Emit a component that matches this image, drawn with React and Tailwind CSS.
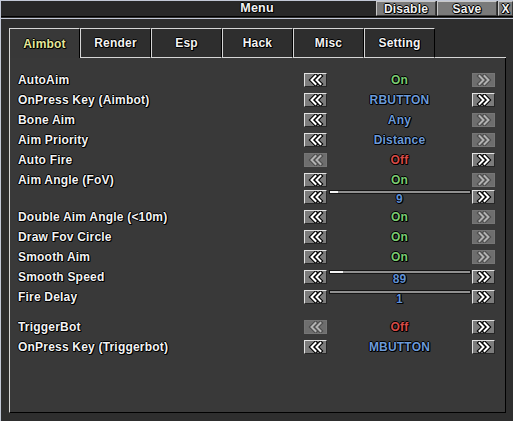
import React from "react";

const OL = "[text-shadow:1px_0_0_#000,-1px_0_0_#000,0_1px_0_#000,0_-1px_0_#000,1px_1px_0_#000]";

function Chevrons({ dir, dim }) {
  const pts =
    dir === "left"
      ? ["7.5,2 3.5,6 7.5,10", "12.5,2 8.5,6 12.5,10"]
      : ["3.5,2 7.5,6 3.5,10", "8.5,2 12.5,6 8.5,10"];
  const fg = dim ? "#b2b2b2" : "#ffffff";
  const bg = dim ? "#4c4c4c" : "#000000";
  return (
    <svg width="16" height="12" viewBox="0 0 16 12">
      {pts.map((p) => (
        <polyline key={p + "b"} points={p} fill="none" stroke={bg} strokeWidth="4.2" strokeLinejoin="miter" strokeLinecap="square" />
      ))}
      {pts.map((p) => (
        <polyline key={p + "f"} points={p} fill="none" stroke={fg} strokeWidth="2" strokeLinejoin="miter" strokeLinecap="square" />
      ))}
    </svg>
  );
}

function ArrowBtn({ dir, on }) {
  return on ? (
    <div className="w-[23px] h-[14px] flex items-center justify-center bg-[#7c7c7c] border border-t-[#e2e2e2] border-l-[#e2e2e2] border-b-[#262626] border-r-[#262626]">
      <Chevrons dir={dir} />
    </div>
  ) : (
    <div className="w-[23px] h-[14px] flex items-center justify-center bg-[#6e6e6e] border border-[#767676]">
      <Chevrons dir={dir} dim />
    </div>
  );
}

const colorCls = {
  green: "text-[#7acb72]",
  red: "text-[#d64a46]",
  blue: "text-[#6c9ad8]",
};

const rows = [
  { label: "AutoAim", value: "On", c: "green", l: true, r: false },
  { label: "OnPress Key (Aimbot)", value: "RBUTTON", c: "blue", l: true, r: true },
  { label: "Bone Aim", value: "Any", c: "blue", l: true, r: false },
  { label: "Aim Priority", value: "Distance", c: "blue", l: true, r: false },
  { label: "Auto Fire", value: "Off", c: "red", l: false, r: true },
  { label: "Aim Angle (FoV)", value: "On", c: "green", l: true, r: false },
  { slider: true, short: true, label: "", value: "9", fill: 8 },
  { label: "Double Aim Angle (<10m)", value: "On", c: "green", l: true, r: false },
  { label: "Draw Fov Circle", value: "On", c: "green", l: true, r: false },
  { label: "Smooth Aim", value: "On", c: "green", l: true, r: false },
  { slider: true, label: "Smooth Speed", value: "89", fill: 13 },
  { slider: true, label: "Fire Delay", value: "1", fill: 0 },
  { gap: true },
  { label: "TriggerBot", value: "Off", c: "red", l: false, r: true },
  { label: "OnPress Key (Triggerbot)", value: "MBUTTON", c: "blue", l: true, r: true },
];

function Row({ row }) {
  if (row.gap) return <div className="h-[10px]" />;
  if (row.slider) {
    return (
      <div className={row.short ? "h-[17px] flex items-start pl-[8px] pr-[10px]" : "h-[20px] flex items-center pl-[8px] pr-[10px]"}>
        <div className={`flex-1 leading-none ${OL}`}>{row.label}</div>
        <div className="w-[191px] flex items-start">
          <ArrowBtn dir="left" on />
          <div className="w-[145px] h-[14px] flex flex-col items-center">
            <div className="w-[142px] h-[5px] bg-[#909090] border border-[#151515] flex">
              <div className="h-full bg-[#f4f4f4]" style={{ width: row.fill }} />
            </div>
            <div className={`h-[10px] leading-[10px] text-[#5f8fd2] ${OL}`}>{row.value}</div>
          </div>
          <ArrowBtn dir="right" on />
        </div>
      </div>
    );
  }
  return (
    <div className="h-[20px] flex items-center pl-[8px] pr-[10px]">
      <div className={`flex-1 leading-none ${OL}`}>{row.label}</div>
      <div className="w-[191px] flex items-center">
        <ArrowBtn dir="left" on={row.l} />
        <div className={`w-[145px] text-center leading-none ${colorCls[row.c]} ${OL}`}>{row.value}</div>
        <ArrowBtn dir="right" on={row.r} />
      </div>
    </div>
  );
}

const tabs = ["Aimbot", "Render", "Esp", "Hack", "Misc", "Setting"];

export default function App() {
  return (
    <div className="w-[513px] h-[421px] overflow-hidden bg-[#2e2e2e] border-l border-t border-[#c2c8d6] flex flex-col font-['Liberation_Sans',Arial,sans-serif] font-bold text-[12px] text-[#f3f3f3] tracking-[0.2px]">
      {/* title bar */}
      <div className="h-[16px] shrink-0 grid grid-cols-[1fr_auto_1fr] items-stretch bg-[#282828] border-b border-black">
        <div />
        <div className={`flex items-center leading-none text-[12.5px] ${OL}`}>Menu</div>
        <div className="flex justify-end gap-[1px]">
          <div className={`w-[60px] flex items-center justify-center leading-none bg-[#7a7a7a] border border-t-[#c8c8c8] border-l-[#c8c8c8] border-b-[#3a3a3a] border-r-[#3a3a3a] ${OL}`}>Disable</div>
          <div className={`w-[60px] flex items-center justify-center leading-none bg-[#7a7a7a] border border-t-[#c8c8c8] border-l-[#c8c8c8] border-b-[#3a3a3a] border-r-[#3a3a3a] ${OL}`}>Save</div>
          <div className={`w-[15px] flex items-center justify-center leading-none bg-[#7a7a7a] border border-t-[#c8c8c8] border-l-[#c8c8c8] border-b-[#3a3a3a] border-r-[#3a3a3a] ${OL}`}>X</div>
        </div>
      </div>
      {/* body */}
      <div className="mt-[1px] flex-1 border-t border-[#c2c8d6] pt-[9px] pl-[8px]">
        <div className="w-[497px] flex flex-col">
          <div className="flex h-[30px]">
            {tabs.map((t, i) =>
              i === 0 ? (
                <div key={t} className={`w-[71px] flex items-center justify-center leading-none bg-[#383838] border-t border-l border-r border-t-[#d6d6d6] border-l-[#d6d6d6] border-r-black text-[#e3e79a] ${OL}`}>{t}</div>
              ) : (
                <div key={t} className={`w-[71px] flex items-center justify-center leading-none bg-[#2e2e2e] border-t border-l border-r border-b border-t-[#d6d6d6] border-l-[#d6d6d6] border-b-[#d6d6d6] border-r-black ${OL}`}>{t}</div>
              )
            )}
            <div className="flex-1 border-b border-[#d6d6d6]" />
          </div>
          <div className="h-[355px] bg-[#393939] border-l border-l-[#d6d6d6] border-r border-r-black border-b border-b-black pt-[12px] flex flex-col">
            {rows.map((r, i) => (
              <Row key={i} row={r} />
            ))}
          </div>
        </div>
      </div>
    </div>
  );
}
